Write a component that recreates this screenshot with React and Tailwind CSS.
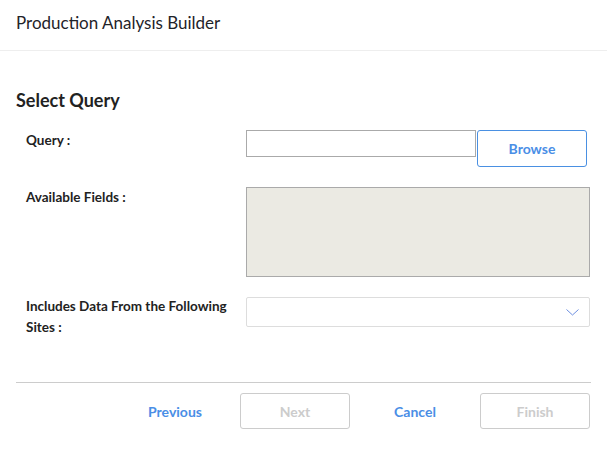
export default function App() {
  const font = { fontFamily: '"Lato", "Noto Sans", sans-serif' };
  return (
    <div className="w-[607px] h-[459px] bg-white text-[#222]" style={font}>
      {/* Header */}
      <div className="h-[51px] border-b border-[#eeeeee] px-4 flex items-center">
        <h1 className="text-[17px] leading-5 pb-1 text-[#1f2329]">Production Analysis Builder</h1>
      </div>

      <div className="px-4">
        <h2 className="mt-[38px] text-[18px] leading-[22px] font-bold">Select Query</h2>

        <div className="mt-[19px] pl-[10px] flex flex-col">
          {/* Query */}
          <div className="flex items-start">
            <div className="w-[220px] pt-[1px] text-[13.5px] leading-[18px] font-bold">Query :</div>
            <input className="w-[230px] h-[27px] border border-[#aaaaaa] outline-none" />
            <button className="ml-[1px] w-[110px] h-[37px] border border-[#4a90e2] rounded-[3px] text-[#4a8ee6] text-[14px] font-bold">
              Browse
            </button>
          </div>

          {/* Available fields */}
          <div className="mt-5 flex items-start">
            <div className="w-[220px] pt-[1px] text-[13.5px] leading-[18px] font-bold">Available Fields :</div>
            <div className="w-[344px] h-[90px] bg-[#ebeae3] border border-[#aaaaaa]" />
          </div>

          {/* Sites */}
          <div className="mt-5 flex items-start">
            <div className="w-[220px] -mt-[1px] pr-2 text-[13.5px] leading-[21px] font-bold">
              Includes Data From the Following Sites :
            </div>
            <div className="w-[344px] h-[30px] border border-[#dddddd] rounded-[2px] flex items-center justify-end pr-[10px]">
              <svg width="13" height="7" viewBox="0 0 13 7" fill="none">
                <path d="M0.5 0.5 L6.5 6 L12.5 0.5" stroke="#6d8fe0" strokeWidth="1" />
              </svg>
            </div>
          </div>
        </div>

        {/* Footer */}
        <div className="mt-[44px] border-t border-[#cccccc] flex justify-end gap-[10px] pt-[10px] pr-[1px]">
          <button className="w-[110px] h-9 text-[#4a8ee6] text-[14px] font-bold">Previous</button>
          <button className="w-[110px] h-9 border border-[#cccccc] rounded-[3px] text-[#cccccc] text-[14px] font-bold">Next</button>
          <button className="w-[110px] h-9 text-[#4a8ee6] text-[14px] font-bold">Cancel</button>
          <button className="w-[110px] h-9 border border-[#cccccc] rounded-[3px] text-[#cccccc] text-[14px] font-bold">Finish</button>
        </div>
      </div>
    </div>
  );
}
